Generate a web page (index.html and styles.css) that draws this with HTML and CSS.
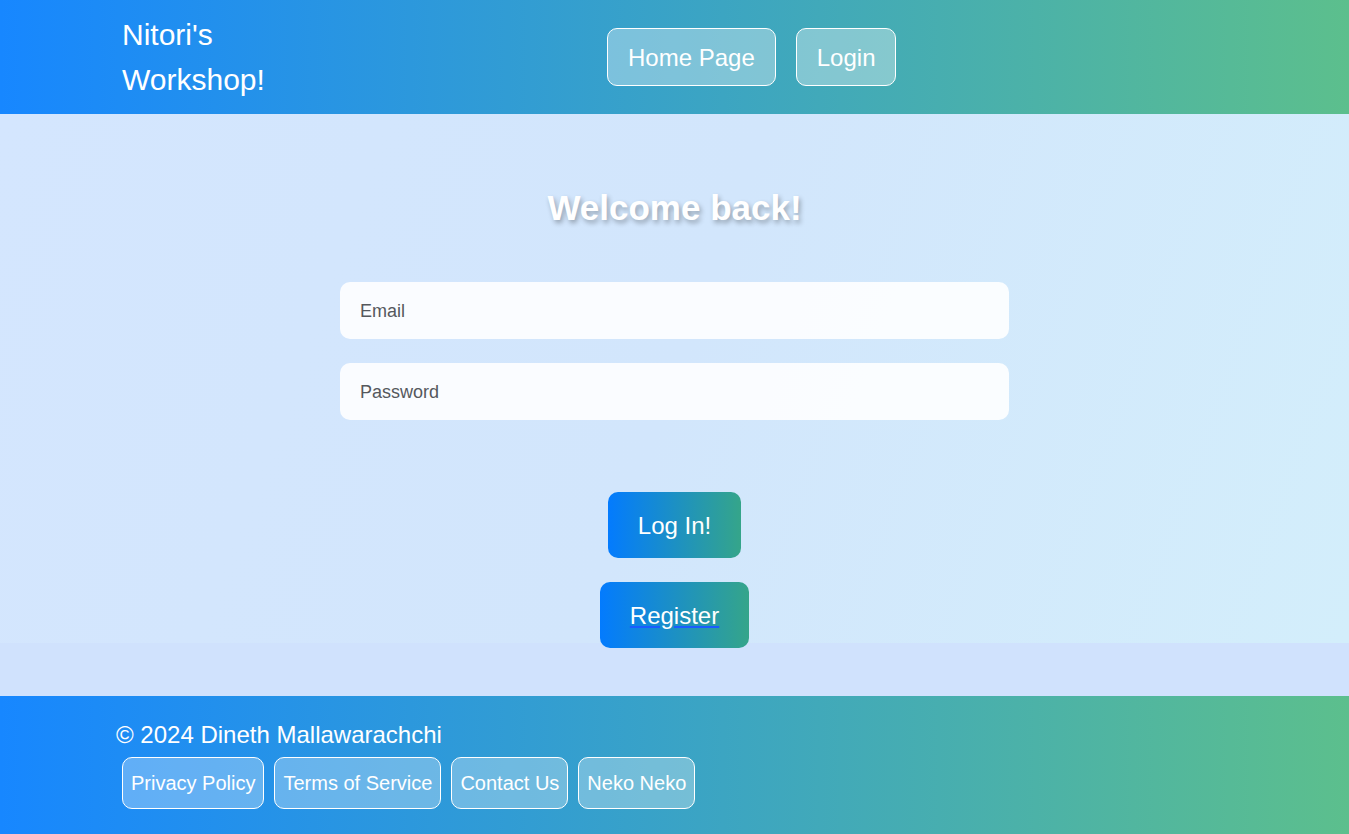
FILE: index.html
```html
<!DOCTYPE html>
<html lang="en">
<head>
<meta charset="utf-8">
<title>Nitori's Workshop! - Login</title>
<link rel="stylesheet" href="styles.css">
</head>
<body>
<header class="site-header">
  <div class="logo">Nitori's<br>Workshop!</div>
  <nav class="nav">
    <a class="nav-btn" href="#">Home Page</a>
    <a class="nav-btn" href="#">Login</a>
  </nav>
</header>
<main class="main">
  <h1 class="title">Welcome back!</h1>
  <form class="login-form">
    <input class="field" type="email" placeholder="Email">
    <input class="field" type="password" placeholder="Password">
    <div class="actions">
      <button class="grad-btn" type="button">Log In!</button>
      <button class="grad-btn" type="button"><span class="link-text">Register</span></button>
    </div>
  </form>
</main>
<footer class="site-footer">
  <div class="copyright">© 2024 Dineth Mallawarachchi</div>
  <div class="footer-links">
    <a class="foot-btn" href="#">Privacy Policy</a>
    <a class="foot-btn" href="#">Terms of Service</a>
    <a class="foot-btn" href="#">Contact Us</a>
    <a class="foot-btn" href="#">Neko Neko</a>
  </div>
</footer>
</body>
</html>
```

FILE: styles.css
```css
html, body {
  margin: 0;
  padding: 0;
}
body {
  font-family: "Liberation Sans", Arial, sans-serif;
  background: #d0e2fd;
  min-height: 100vh;
  display: flex;
  flex-direction: column;
}
.site-header {
  height: 114px;
  box-sizing: border-box;
  background: linear-gradient(to right, #1787ff, #5cbf8d);
  display: flex;
  align-items: flex-start;
  padding-left: 122px;
}
.logo {
  width: 485px;
  color: #fff;
  font-size: 30px;
  line-height: 45px;
  padding-top: 12px;
}
.nav {
  display: flex;
  gap: 20px;
  padding-top: 28px;
}
.nav-btn {
  display: block;
  height: 58px;
  box-sizing: border-box;
  line-height: 58px;
  padding: 0 20px;
  border: 1px solid #fff;
  border-radius: 10px;
  background: rgba(255, 255, 255, 0.35);
  color: #fff;
  font-size: 24px;
  text-decoration: none;
}
.main {
  flex: 1;
  background: linear-gradient(110deg, #d4e6fe 0%, #d2e6fc 50%, #d3eefb 100%) top / 100% 529px no-repeat, #d0e2fd;
  display: flex;
  flex-direction: column;
  align-items: center;
  padding-top: 74px;
}
.title {
  margin: 0;
  font-size: 35px;
  line-height: 40px;
  font-weight: bold;
  color: #fff;
  text-shadow: 2px 3px 5px rgba(0, 0, 0, 0.3);
}
.login-form {
  margin-top: 54px;
  display: flex;
  flex-direction: column;
  align-items: center;
  gap: 24px;
}
.field {
  width: 669px;
  height: 57px;
  box-sizing: border-box;
  border: none;
  border-radius: 10px;
  background: rgba(255, 255, 255, 0.88);
  padding: 2px 20px 0;
  font-family: "Liberation Sans", Arial, sans-serif;
  font-size: 18px;
  color: #333;
  outline: none;
}
.field::placeholder {
  color: #55585d;
}
.actions {
  margin-top: 48px;
  display: flex;
  flex-direction: column;
  align-items: center;
  gap: 24px;
}
.grad-btn {
  border: none;
  border-radius: 10px;
  background: linear-gradient(to right, #037bfe, #35a58a);
  color: #fff;
  font-family: "Liberation Sans", Arial, sans-serif;
  font-size: 24px;
  line-height: 30px;
  padding: 19px 30px 17px;
  cursor: pointer;
}
.link-text {
  text-decoration: underline;
  text-decoration-color: #1a5cff;
}
.site-footer {
  height: 138px;
  box-sizing: border-box;
  background: linear-gradient(to right, #1787ff, #5cbf8d);
  padding: 25px 0 0 116px;
}
.copyright {
  color: #fff;
  font-size: 24px;
  line-height: 28px;
}
.footer-links {
  margin-top: 8px;
  display: flex;
  gap: 10px;
  padding-left: 6px;
}
.foot-btn {
  display: block;
  height: 52px;
  box-sizing: border-box;
  line-height: 50px;
  padding: 0 8px;
  border: 1px solid #fff;
  border-radius: 10px;
  background: rgba(255, 255, 255, 0.3);
  color: #fff;
  font-size: 20px;
  text-decoration: none;
}
```
